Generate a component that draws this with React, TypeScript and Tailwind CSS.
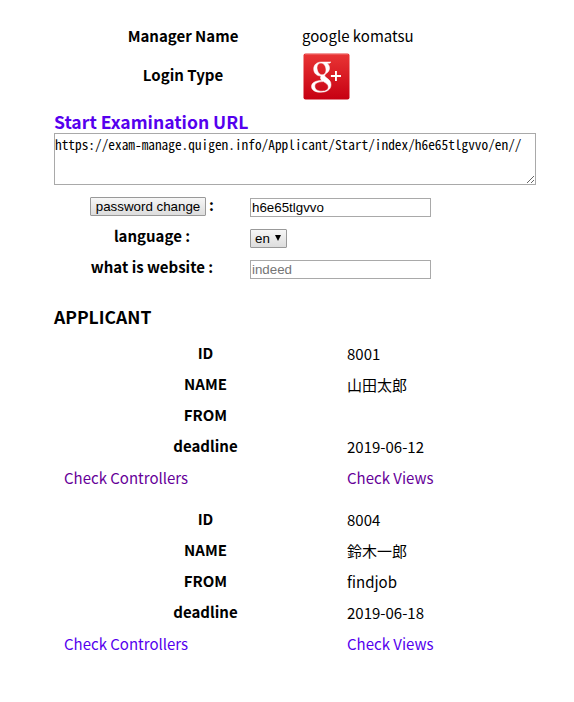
import type { ReactNode } from "react";

type Applicant = {
  id: string;
  name: string;
  from: string;
  deadline: string;
  linkClass: string;
};

const applicants: Applicant[] = [
  { id: "8001", name: "山田太郎", from: "", deadline: "2019-06-12", linkClass: "text-[#660099]" },
  { id: "8004", name: "鈴木一郎", from: "findjob", deadline: "2019-06-18", linkClass: "text-[#5500ee]" },
];

function GooglePlusLogo() {
  return (
    <svg width="47" height="47" viewBox="0 0 47 47" className="block" aria-label="Google+">
      <defs>
        <linearGradient id="gp" x1="0" y1="0" x2="0" y2="1">
          <stop offset="0" stopColor="#e93535" />
          <stop offset="1" stopColor="#c60012" />
        </linearGradient>
      </defs>
      <rect x="0.5" y="0.5" width="46" height="46" rx="2" fill="url(#gp)" />
      <path d="M2 1.5h43" stroke="#f06a6a" strokeWidth="0.6" />
      <g fill="#fff" fillRule="evenodd">
        <path
          stroke="#fff"
          strokeWidth="0.5"
          d="M28 9H18.5C13.500 9 10.700 12 10.700 16C10.700 20 13.500 23 18 23C17 25 17.500 26.500 19 27.500C12 27.500 8.500 30 8.500 33.500C8.500 37 12 39.300 17.500 39.300C24.500 39.300 28 36 28 31.800C28 28.500 26.500 27 23.500 24.800C21 23 21.300 22 23.500 20.300C25.500 18.800 26.500 17.200 26.500 15C26.500 13 25.500 11.300 24 10.200H26.500ZM18 10C21 10 23 13.500 23 17C23 20 21.500 21.800 19.200 21.800C16 21.800 14 18 14 14.500C14 11.800 15.500 10 18 10ZM20.500 28.600C24 31 25.300 31.800 25.300 34C25.300 36.500 23 38.200 19 38.200C14.500 38.200 11.800 36.200 11.800 33.200C11.800 30.200 15 28.600 20.500 28.600Z"
        />
        <path d="M32 18h1.900v4.100h4.100v1.900h-4.100v4.100h-1.900v-4.100h-4.100v-1.900h4.100z" />
      </g>
    </svg>
  );
}

function FormRow({ label, children }: { label: ReactNode; children: ReactNode }) {
  return (
    <div className="flex h-[31px]">
      <div className="w-[196px] text-center font-bold leading-[22px]">{label}</div>
      <div className="pt-[4px]">{children}</div>
    </div>
  );
}

function DataRow({ label, value }: { label: string; value: string }) {
  return (
    <div className="flex h-[31px]">
      <div className="w-[303px] text-center font-bold leading-[22px]">{label}</div>
      <div className="-ml-[10px] pt-px leading-[22px]">{value}</div>
    </div>
  );
}

export default function App() {
  return (
    <main className="h-[702px] w-[574px] overflow-hidden bg-white pl-[54px] pt-[25px] font-['Noto_Sans_CJK_JP','Noto_Sans',sans-serif] text-[15px] text-black">
      <div className="flex h-[28px]">
        <div className="w-[258px] text-center font-bold leading-[22px]">Manager Name</div>
        <div className="-ml-[10px] leading-[22px]">google komatsu</div>
      </div>
      <div className="flex h-[56px]">
        <div className="w-[258px] pt-[11px] text-center font-bold leading-[22px]">Login Type</div>
        <div className="-ml-[9px]">
          <GooglePlusLogo />
        </div>
      </div>

      <h2 className="h-[24px] text-[17.55px] font-bold leading-[25px] text-[#5500ee]">Start Examination URL</h2>
      <textarea
        className="block h-[52px] w-[482px] resize border border-[#a9a9a9] bg-white px-0 py-px font-['Noto_Sans_Mono_CJK_JP','Noto_Sans_CJK_JP',monospace] text-[13.333px] leading-[19px] outline-none"
        defaultValue="https://exam-manage.quigen.info/Applicant/Start/index/h6e65tlgvvo/en//"
      />

      <section className="pt-[9px]">
        <FormRow
          label={
            <div className="flex items-start justify-center gap-[3px]">
              <button className="mt-[3px] h-[19px] w-[116px] rounded-[1px] border border-[#999] bg-linear-to-b from-[#f6f6f6] to-[#dddddd] font-['Liberation_Sans',sans-serif] text-[13.333px] font-normal leading-[16px]">
                password change
              </button>
              <span>:</span>
            </div>
          }
        >
          <input
            className="block h-[19px] w-[181px] border border-[#a9a9a9] px-px font-['Liberation_Sans',sans-serif] text-[13.333px] leading-[15px] outline-none"
            defaultValue="h6e65tlgvvo"
          />
        </FormRow>
        <FormRow label="language :">
          <button className="flex h-[19px] w-[37px] items-center rounded-[1px] border border-[#999] bg-linear-to-b from-[#f6f6f6] to-[#dddddd] pl-[4px] font-['Liberation_Sans',sans-serif] text-[13.333px] leading-[15px]">
            en
            <svg width="6" height="6" viewBox="0 0 6 6" className="mb-[2px] ml-[5px]">
              <path d="M0 0h6L3 6z" />
            </svg>
          </button>
        </FormRow>
        <FormRow label="what is website :">
          <input
            className="block h-[19px] w-[181px] border border-[#a9a9a9] px-px font-['Liberation_Sans',sans-serif] text-[13.333px] leading-[15px] outline-none placeholder:text-[#757575]"
            placeholder="indeed"
          />
        </FormRow>
      </section>

      <h2 className="mt-[17px] h-[38px] text-[17.55px] font-bold leading-[25px]">APPLICANT</h2>

      {applicants.map((a) => (
        <section key={a.id} className="h-[166px]">
          <DataRow label="ID" value={a.id} />
          <DataRow label="NAME" value={a.name} />
          <DataRow label="FROM" value={a.from} />
          <DataRow label="deadline" value={a.deadline} />
          <div className={`flex pl-[10px] pt-px leading-[22px] ${a.linkClass}`}>
            <a className="w-[283px]">Check Controllers</a>
            <a>Check Views</a>
          </div>
        </section>
      ))}
    </main>
  );
}
